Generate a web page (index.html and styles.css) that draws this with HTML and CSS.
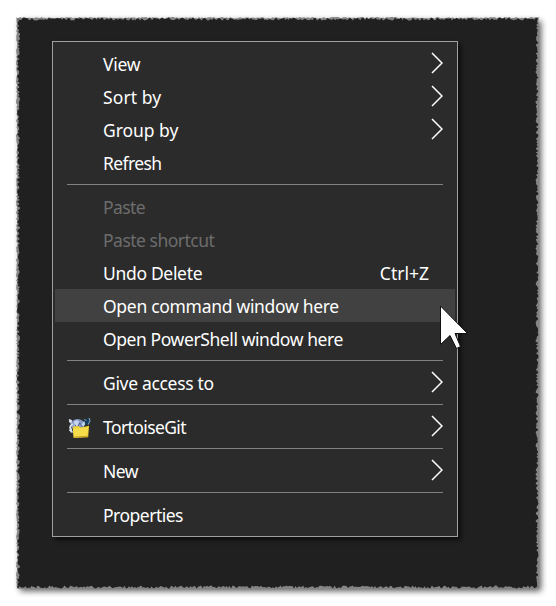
FILE: index.html
```html
<!DOCTYPE html>
<html lang="en">
<head>
<meta charset="utf-8">
<title>Desktop context menu</title>
<link rel="stylesheet" href="styles.css">
</head>
<body>
<main class="desktop">
  <svg class="backdrop" viewBox="0 0 556 606" aria-hidden="true">
    <defs><filter id="soft" x="-5%" y="-5%" width="110%" height="110%"><feGaussianBlur stdDeviation="3"/></filter></defs>
    <rect x="20" y="21" width="521" height="570" fill="#000" opacity=".65" filter="url(#soft)"/>
    <path id="edge" fill="#858585"/>
    <path id="surface" fill="#202020"/>
  </svg>
  <nav class="menu">
    <div class="item"><span class="label">View</span><svg class="arrow" viewBox="0 0 12 22"><path d="M1 1L11 11L1 21"/></svg></div>
    <div class="item"><span class="label wide">Sort by</span><svg class="arrow" viewBox="0 0 12 22"><path d="M1 1L11 11L1 21"/></svg></div>
    <div class="item"><span class="label group">Group by</span><svg class="arrow" viewBox="0 0 12 22"><path d="M1 1L11 11L1 21"/></svg></div>
    <div class="item"><span class="label tight">Refresh</span></div>
    <hr>
    <div class="item disabled"><span class="label tight">Paste</span></div>
    <div class="item disabled"><span class="label narrow">Paste shortcut</span></div>
    <div class="item"><span class="label snug">Undo Delete</span><span class="shortcut">Ctrl+Z</span></div>
    <div class="item active"><span class="label command">Open command window here</span></div>
    <div class="item"><span class="label powershell">Open PowerShell window here</span></div>
    <hr>
    <div class="item"><span class="label snug">Give access to</span><svg class="arrow" viewBox="0 0 12 22"><path d="M1 1L11 11L1 21"/></svg></div>
    <hr>
    <div class="item">
      <svg class="git" viewBox="0 0 24 24">
        <path d="M3 7L1 5V2L4 3L5 8M3 11L1 14L5 17" fill="#d9e2ec"/>
        <ellipse cx="10" cy="8" rx="7" ry="6" fill="#8798c7"/>
        <path d="M6 5l3-2 3 2-1 4-4 1z" fill="#c7d5ed"/>
        <path d="M7 8l3 3 2-5 3 4" fill="none" stroke="#485a91"/>
        <path d="M2 10l3-3M2 10l2 6" fill="none" stroke="#d9e2ec" stroke-width="2"/>
        <path d="M15 9l3-4" fill="none" stroke="#b6d8e8" stroke-width="3"/>
        <path d="M17 3l4-2 2 2-1 4-4 1z" fill="#183c5c"/>
        <path d="M17 2l2 2M22 1l1 3-2 4" fill="none" stroke="#8bb9d8" stroke-width="1"/>
        <path d="M5 10l6-.5 2 1.500 9-2-1 12-15 1z" fill="#edcf35"/>
        <path d="M5 12l16-1-1 9-14 1z" fill="#f5dc4b"/>
        <path d="M6 21l15-1" stroke="#c79e20"/>
      </svg>
      <span class="label tight">TortoiseGit</span><svg class="arrow" viewBox="0 0 12 22"><path d="M1 1L11 11L1 21"/></svg>
    </div>
    <hr>
    <div class="item"><span class="label narrow">New</span><svg class="arrow" viewBox="0 0 12 22"><path d="M1 1L11 11L1 21"/></svg></div>
    <hr>
    <div class="item"><span class="label narrow">Properties</span></div>
  </nav>
  <svg class="cursor" viewBox="0 0 30 44"><path d="M.5 1V39.500L10 30.500L16.500 43.500L20.500 41.500L15 28.500H27.500Z"/></svg>
</main>
<script src="edge.js"></script>
</body>
</html>
```
FILE: styles.css
```css
* { box-sizing: border-box; }
body { margin: 0; background: #fff; font-family: "Noto Sans", "Open Sans", sans-serif; }
.desktop { position: relative; width: 556px; height: 606px; overflow: hidden; padding: 41px 0 0 52px; }
.backdrop { position: absolute; inset: 0; width: 556px; height: 606px; }
.menu {
  position: relative; width: 406px; height: 496px; padding: 5px 2px;
  background: #2b2b2b; border: 1px solid #a0a0a0; box-shadow: 3px 3px 4px #0009;
}
.item {
  position: relative; display: flex; align-items: center; height: 33px; padding: 2px 12px 0 48px;
  color: #fff; font-size: 17.5px; line-height: 31px; white-space: nowrap;
}
.label { letter-spacing: -.25px; }
.wide { letter-spacing: .1px; }
.group { letter-spacing: -.05px; }
.snug { letter-spacing: -.32px; }
.command { letter-spacing: -.3px; }
.powershell { letter-spacing: -.41px; }
.narrow { letter-spacing: -.5px; }
.tight { letter-spacing: -.6px; }
.disabled { color: #6d6d6d; }
.active { background: #414141; }
.shortcut { margin-left: auto; margin-right: 14px; letter-spacing: 0; }
.arrow { width: 12px; height: 22px; margin-left: auto; margin-top: -4px; fill: none; stroke: #fff; stroke-width: 1.5; }
.git { position: absolute; left: 12px; top: 7px; width: 25px; height: 23px; }
hr { height: 1px; margin: 5px 12px; border: 0; background: #808080; }
.cursor { position: absolute; left: 440px; top: 305px; width: 30px; height: 44px; fill: #fff; stroke: #111; stroke-width: 1; }
```
FILE: edge.js
```js
// Torn outline made of small, irregular teeth.
let seed = 7;
const rnd = () => (seed = (seed * 16807) % 2147483647) / 2147483647;
function torn(l, t, r, b, depth) {
  const pts = [];
  const jag = () => rnd() * depth;
  for (let x = l; x < r; x += 1.5) pts.push([x, t + jag()]);
  for (let y = t; y < b; y += 1.5) pts.push([r - jag(), y]);
  for (let x = r; x > l; x -= 1.5) pts.push([x, b - jag()]);
  for (let y = b; y > t; y -= 1.5) pts.push([l + jag(), y]);
  return "M" + pts.map(p => p[0].toFixed(1) + " " + p[1].toFixed(1)).join("L") + "Z";
}
document.getElementById("edge").setAttribute("d", torn(16, 17, 539.5, 589.5, 1.5));
document.getElementById("surface").setAttribute("d", torn(17, 17.5, 538.5, 588.5, 3));
```
